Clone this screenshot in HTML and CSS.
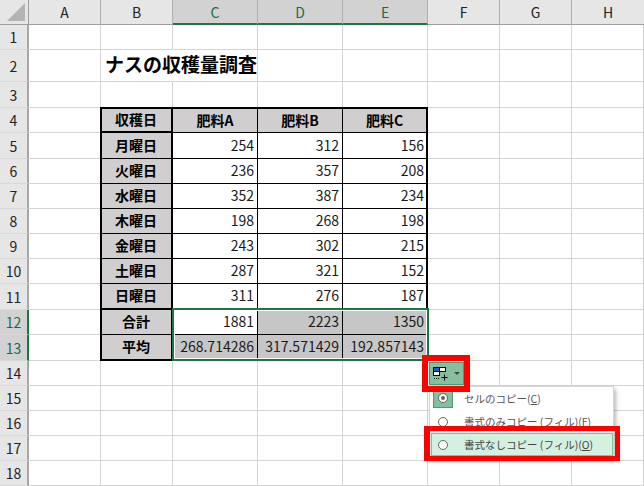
FILE: index.html
```html
<!DOCTYPE html>
<html lang="ja">
<head>
<meta charset="utf-8">
<title>ナスの収穫量調査</title>
<link rel="stylesheet" href="styles.css">
</head>
<body>
<div class="sheet">
  <div class="h corner"><svg class="tri" width="18" height="18" viewBox="0 0 18 18"><path d="M18 0V18H0Z" fill="#b4b4b4"/></svg></div>
  <div class="h col">A</div><div class="h col">B</div><div class="h col on">C</div><div class="h col on">D</div><div class="h col on">E</div><div class="h col">F</div><div class="h col">G</div><div class="h col end">H</div>

  <div class="h row">1</div><div class="c"></div><div class="c"></div><div class="c"></div><div class="c"></div><div class="c"></div><div class="c"></div><div class="c"></div><div class="c"></div>
  <div class="h row">2</div><div class="c"></div><div class="c title">ナスの収穫量調査</div><div class="c"></div><div class="c"></div><div class="c"></div><div class="c"></div><div class="c"></div><div class="c"></div>
  <div class="h row">3</div><div class="c"></div><div class="c"></div><div class="c"></div><div class="c"></div><div class="c"></div><div class="c"></div><div class="c"></div><div class="c"></div>

  <div class="h row">4</div><div class="c"></div><div class="c t lab top">収穫日</div><div class="c t hd top">肥料A</div><div class="c t hd top">肥料B</div><div class="c t hd top right">肥料C</div><div class="c"></div><div class="c"></div><div class="c"></div>
  <div class="h row">5</div><div class="c"></div><div class="c t lab">月曜日</div><div class="c t n">254</div><div class="c t n">312</div><div class="c t n right">156</div><div class="c"></div><div class="c"></div><div class="c"></div>
  <div class="h row">6</div><div class="c"></div><div class="c t lab">火曜日</div><div class="c t n">236</div><div class="c t n">357</div><div class="c t n right">208</div><div class="c"></div><div class="c"></div><div class="c"></div>
  <div class="h row">7</div><div class="c"></div><div class="c t lab">水曜日</div><div class="c t n">352</div><div class="c t n">387</div><div class="c t n right">234</div><div class="c"></div><div class="c"></div><div class="c"></div>
  <div class="h row">8</div><div class="c"></div><div class="c t lab">木曜日</div><div class="c t n">198</div><div class="c t n">268</div><div class="c t n right">198</div><div class="c"></div><div class="c"></div><div class="c"></div>
  <div class="h row">9</div><div class="c"></div><div class="c t lab">金曜日</div><div class="c t n">243</div><div class="c t n">302</div><div class="c t n right">215</div><div class="c"></div><div class="c"></div><div class="c"></div>
  <div class="h row">10</div><div class="c"></div><div class="c t lab">土曜日</div><div class="c t n">287</div><div class="c t n">321</div><div class="c t n right">152</div><div class="c"></div><div class="c"></div><div class="c"></div>
  <div class="h row">11</div><div class="c"></div><div class="c t lab sep">日曜日</div><div class="c t n sep">311</div><div class="c t n sep">276</div><div class="c t n right sep">187</div><div class="c"></div><div class="c"></div><div class="c"></div>
  <div class="h row on">12</div><div class="c"></div><div class="c t lab">合計</div><div class="c t n">1881</div><div class="c t n g">2223</div><div class="c t n g right">1350</div><div class="c"></div><div class="c"></div><div class="c"></div>
  <div class="h row on">13</div><div class="c"></div><div class="c t lab bot">平均</div><div class="c t n g bot">268.714286</div><div class="c t n g bot">317.571429</div><div class="c t n g bot right">192.857143</div><div class="c"></div><div class="c"></div><div class="c"></div>

  <div class="h row">14</div><div class="c"></div><div class="c"></div><div class="c"></div><div class="c"></div><div class="c"></div><div class="c"></div><div class="c"></div><div class="c"></div>
  <div class="h row">15</div><div class="c"></div><div class="c"></div><div class="c"></div><div class="c"></div><div class="c"></div><div class="c"></div><div class="c"></div><div class="c"></div>
  <div class="h row">16</div><div class="c"></div><div class="c"></div><div class="c"></div><div class="c"></div><div class="c"></div><div class="c"></div><div class="c"></div><div class="c"></div>
  <div class="h row">17</div><div class="c"></div><div class="c"></div><div class="c"></div><div class="c"></div><div class="c"></div><div class="c"></div><div class="c"></div><div class="c"></div>
  <div class="h row">18</div><div class="c"></div><div class="c"></div><div class="c"></div><div class="c"></div><div class="c"></div><div class="c"></div><div class="c"></div><div class="c"></div>

  <div class="selection"></div>

  <div class="fill-btn">
    <svg width="15" height="14" viewBox="0 0 15 14">
      <rect x="0.5" y="0.5" width="6" height="4" fill="#2a55d8" stroke="#000"/>
      <rect x="6.500" y="0.5" width="6" height="4" fill="#fff" stroke="#000"/>
      <rect x="0.5" y="4.5" width="6" height="4" fill="#fff" stroke="#000"/>
      <path d="M1 11.500h1M3 11.500h1M5 11.500h1" stroke="#000"/>
      <path d="M11.500 7.500v6M8.500 10.500h6" stroke="#000"/>
    </svg>
    <svg class="caret" width="6" height="3" viewBox="0 0 6 3"><path d="M0 0H6L3 3Z" fill="#444"/></svg>
  </div>

  <div class="menu">
    <div class="item"><span class="mark checked"><span class="radio dot"></span></span><span class="label">セルのコピー(<u>C</u>)</span></div>
    <div class="item"><span class="mark"><span class="radio"></span></span><span class="label">書式のみコピー (フィル)(<u>F</u>)</span></div>
    <div class="item active"><span class="mark"><span class="radio"></span></span><span class="label">書式なしコピー (フィル)(<u>O</u>)</span></div>
  </div>

  <div class="red red-btn"></div>
  <div class="red red-item"></div>
</div>
</body>
</html>
```

FILE: styles.css
```css
* { box-sizing: border-box; }
html, body { margin: 0; padding: 0; background: #fff; overflow: hidden; }
body { width: 644px; height: 486px; }

.sheet {
  position: relative;
  width: 644px;
  height: 486px;
  display: grid;
  grid-template-columns: 29px 72px 72px 85px 85px 85px 72px 72px 72px;
  grid-template-rows: 25px 25px 32px 26px 25px 26px 25px 25px 25px 25px 25px 26px 25px 26px 25px 25px 25px 25px 25px;
  font-family: "Noto Sans CJK JP", "Noto Sans", sans-serif;
  font-size: 14px;
  color: #000;
  overflow: hidden;
}

.h {
  display: flex;
  align-items: center;
  justify-content: center;
  background: #e6e6e6;
  color: #222;
  font-size: 14px;
  line-height: 1;
}
.corner {
  border-right: 1px solid #9e9e9e;
  border-bottom: 1px solid #9e9e9e;
  align-items: flex-end;
  justify-content: flex-end;
  padding: 0 3px 3px 0;
}
.tri { display: block; flex: none; }
.col { border-right: 1px solid #b0b0b0; border-bottom: 1px solid #9e9e9e; }
.col.end { border-right: 0; }
.col.on { background: #d2d2d2; color: #1c6b45; border-bottom: 2px solid #217346; }
.row { border-right: 2px solid #a6a6a6; border-bottom: 1px solid #d8d8d8; }
.row.on { background: #d2d2d2; color: #1c6b45; border-right: 2px solid #217346; }

.c {
  border-right: 1px solid #d4d4d4;
  border-bottom: 1px solid #d4d4d4;
  display: flex;
  align-items: center;
  min-width: 0;
  white-space: nowrap;
}

.title {
  font-size: 19px;
  font-weight: 700;
  padding: 0 0 5px 4px;
  border-right-color: transparent;
}

.t { border-right: 1px solid #000; border-bottom: 1px solid #000; padding-bottom: 2px; }
.lab, .hd {
  background: #d0cece;
  justify-content: center;
  font-weight: 700;
  font-size: 14px;
}
.lab {
  margin-left: -1px;
  border-left: 2px solid #000;
  border-right: 2px solid #000;
  padding-right: 1px;
}
.n { justify-content: flex-end; padding-right: 3px; color: #1a1a1a; }
.g { background: #c6c6c6; }
.top { margin-top: -1px; border-top: 2px solid #000; }
.lab.top { border-bottom-width: 2px; }
.right { border-right: 2px solid #000; }
.n.right { padding-right: 2px; }
.sep, .bot { border-bottom: 2px solid #000; }

.selection {
  position: absolute;
  left: 172px;
  top: 308px;
  width: 257px;
  height: 53px;
  border: 2px solid #217346;
  outline: 1px solid #fff;
  outline-offset: -3px;
}

.fill-btn {
  position: absolute;
  left: 429px;
  top: 362px;
  width: 35px;
  height: 23px;
  background: #86bf9e;
  border: 1px solid #4f9a72;
  display: flex;
  align-items: center;
  padding-left: 3px;
  gap: 6px;
}
.fill-btn svg { display: block; flex: none; }

.menu {
  position: absolute;
  left: 429px;
  top: 386px;
  width: 185px;
  height: 72px;
  background: #fff;
  border: 1px solid #d6d6d6;
  box-shadow: 2px 3px 4px rgba(0, 0, 0, 0.28);
  padding: 0 0 0 1px;
  display: flex;
  flex-direction: column;
  font-size: 10.500px;
  color: #555;
}
.item {
  height: 23px;
  flex: none;
  display: flex;
  align-items: center;
  gap: 11px;
  border: 1px solid transparent;
  white-space: nowrap;
}
.item.active { background: #d3f0e0; border-color: #86bf9e; color: #444; }
.mark {
  width: 20px;
  height: 20px;
  display: flex;
  align-items: center;
  justify-content: center;
  flex: none;
  margin-left: 1px;
}
.mark.checked { background: #86bf9e; border: 1px solid #4f9a72; margin-top: -1px; }
.radio {
  width: 10px;
  height: 10px;
  border: 1px solid #666;
  border-radius: 50%;
  background: #fff;
  display: block;
  position: relative;
}
.radio.dot::after {
  content: "";
  position: absolute;
  left: 2px;
  top: 2px;
  width: 4px;
  height: 4px;
  border-radius: 50%;
  background: #666;
}

.red { position: absolute; border: 5px solid #fe0000; }
.red-btn { left: 422px; top: 355px; width: 48px; height: 37px; border-width: 6px; }
.red-item { left: 424px; top: 426px; width: 196px; height: 35px; border-left-width: 6px; }
```
